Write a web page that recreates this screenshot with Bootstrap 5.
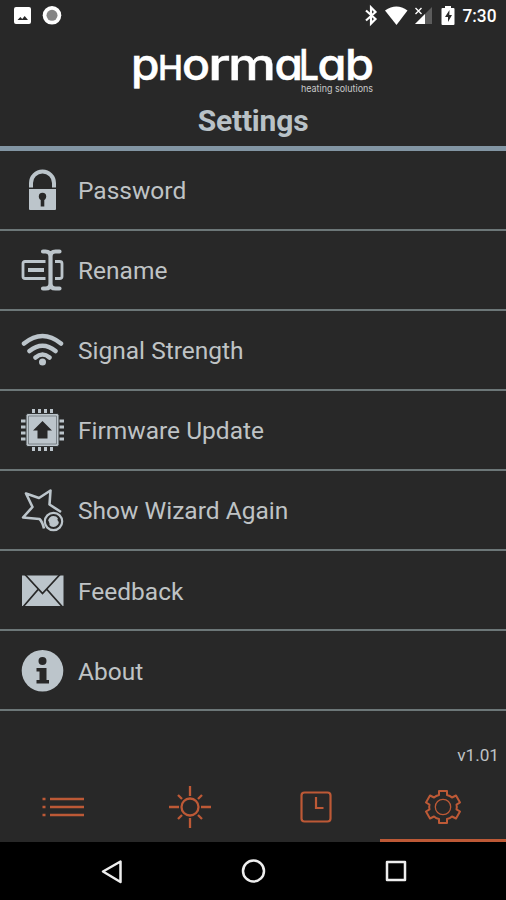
<!DOCTYPE html>
<html lang="en">
<head>
<meta charset="utf-8">
<meta name="viewport" content="width=device-width, initial-scale=1">
<title>Settings</title>
<link href="https://cdn.jsdelivr.net/npm/bootstrap@5.3.0/dist/css/bootstrap.min.css" rel="stylesheet">
<style>
  body { background:#282828; font-family:Roboto,"Liberation Sans",sans-serif; color:#bfc3c5; }
  .phone { width:506px; height:900px; overflow:hidden; }
  svg { display:block; flex:none; }
  .statusbar { height:32px; color:#fff; }
  .brand-head { height:118.5px; border-bottom:5px solid #8295a3; }
  .wordmark { font-family:Inter,sans-serif; font-feature-settings:"cv11"; font-weight:500; stroke:#fff; stroke-width:.5; }
  .page-title { font-size:30px; line-height:36px; font-weight:700; color:#b9c2c7; margin-top:3px; letter-spacing:-.2px; }
  .settings-item { height:80.1px; padding:3px 0 0 21px; border:0; border-bottom:2px solid #6c7778 !important; font-size:24.500px; line-height:30px; background:transparent; color:#bfc3c5; gap:14px; }
  .settings-item svg { width:43px; height:43px; color:#bcc5cb; margin-top:-1px; }
  .version { font-size:17.200px; line-height:22px; padding-right:7px; height:60.5px; padding-top:33px; }
  .tabs { height:70px; color:#bd5936; }
  .tab { border-bottom:3px solid transparent; padding-top:3px; color:inherit; }
  .tab.active { border-color:#bd5936; }
  .sysnav { height:58px; background:#000; }
</style>
<script src="https://cdn.jsdelivr.net/npm/bootstrap@5.3.0/dist/js/bootstrap.bundle.min.js"></script>
</head>
<body>
<div class="phone d-flex flex-column">
  <div class="statusbar">
    <svg width="506" height="32" viewBox="0 0 506 32" fill="#fff">
      <path fill-rule="evenodd" d="M16 7h13q2 0 2 2v13q0 2-2 2h-13q-2 0-2-2v-13q0-2 2-2zM17.500 20h10.500l-3.300-4-2.500 3-1.800-2z"/>
      <circle cx="52" cy="15.300" r="9.300"/><circle cx="52" cy="15.300" r="5.500" fill="#858585"/>
      <path d="M366 10.500l9.500 8.500-4.500 4.500v-16l4.500 4.500-9.500 8.500" fill="none" stroke="#fff" stroke-width="2.200"/>
      <path d="M385 10.500q11.500-8 22.500 0L396.500 25z"/>
      <path d="M432 7v17h-17z" fill="#5c5c5c"/><path d="M425 14v10h-10z"/>
      <path d="M415.500 8l6 6m0-6l-6 6" stroke="#fff" stroke-width="1.400"/>
      <path d="M445 6h6v2h2.500q1 0 1 1v15q0 1-1 1h-11q-1 0-1-1V9q0-1 1-1h2.500z"/>
      <path d="M449.500 10l-4.500 7h3v5l4-7h-2.700z" fill="#282828"/>
      <text x="462.500" y="22" font-size="18.500" font-weight="500" textLength="34" lengthAdjust="spacingAndGlyphs">7:30</text>
    </svg>
  </div>
  <header class="brand-head d-flex flex-column align-items-center">
    <svg width="250" height="68" viewBox="128 32 250 68" fill="#fff">
      <text class="wordmark" y="79.500" font-size="43"><tspan x="131" textLength="28.500" lengthAdjust="spacingAndGlyphs">p</tspan><tspan x="158" font-size="34" textLength="25" lengthAdjust="spacingAndGlyphs">H</tspan><tspan x="182" textLength="28" lengthAdjust="spacingAndGlyphs">o</tspan><tspan x="208" textLength="22" lengthAdjust="spacingAndGlyphs">r</tspan><tspan x="228" textLength="48" lengthAdjust="spacingAndGlyphs">m</tspan><tspan x="274.500" textLength="28.500" lengthAdjust="spacingAndGlyphs">a</tspan><tspan x="299" font-size="42" textLength="20" lengthAdjust="spacingAndGlyphs">L</tspan><tspan x="317.500" textLength="29" lengthAdjust="spacingAndGlyphs">a</tspan><tspan x="345" textLength="29" lengthAdjust="spacingAndGlyphs">b</tspan></text>
      <text x="301" y="92" font-family="Inter, sans-serif" font-size="9.500" textLength="72" lengthAdjust="spacingAndGlyphs" fill="#c9c9c9">heating solutions</text>
    </svg>
    <h1 class="page-title mb-0">Settings</h1>
  </header>
  <main class="list-group list-group-flush">
    <a class="list-group-item settings-item d-flex align-items-center">
      <svg viewBox="0 0 43 43"><path d="M10 18.500V14a11.500 11.500 0 0 1 23 0v4.500" fill="none" stroke="currentColor" stroke-width="4"/><path d="M8 20h27v20q0 1-1 1H9q-1 0-1-1z" fill="currentColor"/><circle cx="21.500" cy="27.500" r="3.700" fill="#282828"/><path d="M19.700 28h3.600v9.500h-3.600z" fill="#282828"/></svg>
      Password</a>
    <a class="list-group-item settings-item d-flex align-items-center">
      <svg viewBox="0 0 43 43" fill="none" stroke="currentColor" stroke-width="2.800"><path d="M24.500 12.500H4q-2 0-2 2v13q0 2 2 2h20.500M34 12.500h4.500q2.500 0 2.500 2v13q0 2-2.500 2H34"/><path d="M7 21h16" stroke-width="4"/><path d="M29.500 4v34M22 2.500h2.500q5 0 5 5 0-5 5-5H38.500M22 39.500h2.500q5 0 5-5 0 5 5 5H38.500" stroke-width="4.200" stroke-linecap="round"/></svg>
      Rename</a>
    <a class="list-group-item settings-item d-flex align-items-center">
      <svg viewBox="0 0 43 43" fill="none" stroke="currentColor" stroke-width="4.500" stroke-linecap="round"><path d="M3 14.500q18.500-15 37 0M8.500 22q13-10.500 26 0M14.500 28.500q7-6 14 0"/><circle cx="21.500" cy="33" r="3.500" fill="currentColor" stroke="none"/></svg>
      Signal Strength</a>
    <a class="list-group-item settings-item d-flex align-items-center">
      <svg viewBox="0 0 43 43" fill="none" stroke="currentColor"><path d="M12.500 0v42M18.500 0v42M24.500 0v42M30.500 0v42M0 12h43M0 18h43M0 24h43M0 30h43" stroke-width="3"/><path d="M7 4.500h29q2 0 2 2v29q0 2-2 2H7q-2 0-2-2v-29q0-2 2-2z" fill="currentColor" stroke="#303435"/><path d="M7.500 7h28v28h-28z" stroke="#6b7276" stroke-width=".8"/><path d="M21.500 12L31 21.500h-4.500V29.500h-10v-8H12z" fill="#282828" stroke="none"/></svg>
      Firmware Update</a>
    <a class="list-group-item settings-item d-flex align-items-center">
      <svg viewBox="0 0 43 43" fill="none" stroke="currentColor" stroke-width="2.600" stroke-linejoin="round"><path d="M23 39.500Q21.500 33 18.500 30L2 28.500 11.500 18 5 4.500 18 9 29.500 1.500 28.500 15.500 40 23"/><circle cx="32.500" cy="32.500" r="8.700" stroke-width="2.200"/><circle cx="32.500" cy="32.500" r="4.500" fill="currentColor" stroke-width="1.800" stroke-dasharray="11 3"/></svg>
      Show Wizard Again</a>
    <a class="list-group-item settings-item d-flex align-items-center">
      <svg viewBox="0 0 43 43"><path d="M1 5.500h41.500V36H1z" fill="currentColor"/><path d="M4 4.500l17.500 19L39 4.500M2 37l15.500-18M41.500 37l-16-18" fill="none" stroke="#282828" stroke-width="1.800"/></svg>
      Feedback</a>
    <a class="list-group-item settings-item d-flex align-items-center">
      <svg viewBox="0 0 43 43"><circle cx="21.500" cy="20.800" r="20.800" fill="currentColor"/><circle cx="21.500" cy="11" r="4" fill="#282828"/><path d="M15.500 18h10v12h2.500v3.500H15.500V30h3v-8.500h-3z" fill="#282828"/></svg>
      About</a>
  </main>
  <div class="version text-end">v1.01</div>
  <nav class="tabs d-flex">
    <a class="tab flex-fill d-flex justify-content-center align-items-center" aria-label="List">
      <svg width="42" height="42" viewBox="0 0 42 42" stroke="currentColor" stroke-width="2.300"><path d="M.5 13h3M8 13h34.500M.5 21h3M8 21h34.500M.5 29h3M8 29h34.500"/></svg></a>
    <a class="tab flex-fill d-flex justify-content-center align-items-center" aria-label="Heat">
      <svg width="42" height="42" viewBox="0 0 42 42" fill="none" stroke="currentColor" stroke-width="2.300"><circle cx="21" cy="21" r="8.500"/><path d="M21 0v10M21 32v10M0 21h10M32 21h10M9 9l4 4M33 9l-4 4M9 33l4-4M33 33l-4-4"/></svg></a>
    <a class="tab flex-fill d-flex justify-content-center align-items-center" aria-label="Timer">
      <svg width="42" height="42" viewBox="0 0 42 42" fill="none" stroke="currentColor" stroke-width="2.200"><rect x="6.500" y="6.500" width="29" height="29" rx="3"/><path d="M21 11v11h7.500"/></svg></a>
    <a class="tab active flex-fill d-flex justify-content-center align-items-center" aria-label="Settings">
      <svg width="42" height="42" viewBox="0 0 42 42" fill="none" stroke="currentColor" stroke-width="2" stroke-linejoin="round"><path d="M17 5h8v4q3 .7 5 2.500l4-2 4 7-3.500 2.200q.7 2.300 0 4.600L38 25.500l-4 7-4-2q-2 1.800-5 2.500v4h-8v-4q-3-.7-5-2.500l-4 2-4-7 3.500-2.200q-.7-2.300 0-4.600L4 16.500l4-7 4 2q2-1.800 5-2.500z"/><circle cx="21" cy="21" r="7.700" stroke-width="1.300"/></svg></a>
  </nav>
  <div class="sysnav">
    <svg width="506" height="58" viewBox="0 842 506 58" fill="none" stroke="#eee" stroke-width="2.500" stroke-linejoin="round"><path d="M120.500 861.500v20.500L103 871.500z"/><circle cx="253.500" cy="871" r="10.500"/><rect x="387" y="862" width="18" height="18"/></svg>
  </div>
</div>
</body>
</html>
